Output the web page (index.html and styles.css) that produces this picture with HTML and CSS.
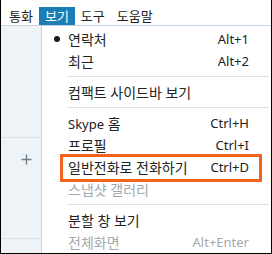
FILE: index.html
```html
<!DOCTYPE html>
<html lang="ko">
<head>
  <meta charset="UTF-8">
  <title>보기 메뉴</title>
  <link rel="stylesheet" href="styles.css">
</head>
<body>

  <div class="window">
    <div class="menubar">
      <span class="menu-item">통화</span>
      <span class="menu-item active">보기</span>
      <span class="menu-item">도구</span>
      <span class="menu-item">도움말</span>
    </div>

    <div class="main">
      <div class="sidebar">
        <div class="side-top"></div>
        <div class="side-mid">
          <svg class="plus" width="11" height="11" viewBox="0 0 11 11">
            <path d="M5.5 0.5 V10.5 M0.5 5.5 H10.5" stroke="#707d8a" stroke-width="1.4" fill="none"/>
          </svg>
        </div>
      </div>

      <div class="dropdown">
        <div class="row"><span class="mark"><span class="dot"></span></span><span class="label">연락처</span><span class="key">Alt+1</span></div>
        <div class="row"><span class="mark"></span><span class="label">최근</span><span class="key">Alt+2</span></div>
        <div class="sep"></div>
        <div class="row"><span class="mark"></span><span class="label">컴팩트 사이드바 보기</span></div>
        <div class="sep"></div>
        <div class="row"><span class="mark"></span><span class="label"><span class="en">Skype</span> 홈</span><span class="key">Ctrl+H</span></div>
        <div class="row"><span class="mark"></span><span class="label">프로필</span><span class="key">Ctrl+I</span></div>
        <div class="row"><span class="mark"></span><span class="label">일반전화로 전화하기</span><span class="key">Ctrl+D</span></div>
        <div class="row disabled"><span class="mark"></span><span class="label">스냅샷 갤러리</span></div>
        <div class="sep"></div>
        <div class="row"><span class="mark"></span><span class="label">분할 창 보기</span></div>
        <div class="row disabled"><span class="mark"></span><span class="label">전체화면</span><span class="key">Alt+Enter</span></div>
      </div>
    </div>

    <div class="highlight"></div>
  </div>

</body>
</html>
```

FILE: styles.css
```css
body {
  margin: 0;
  font-family: "Noto Sans", "Noto Sans CJK KR", sans-serif;
  font-size: 14px;
  color: #222;
}

.window {
  position: relative;
  width: 272px;
  height: 254px;
  box-sizing: border-box;
  border: 1px solid #000;
  border-top: none;
  display: flex;
  flex-direction: column;
  overflow: hidden;
  background: #fff;
}

.menubar {
  display: flex;
  height: 18px;
  padding: 7px 0 0 2px;
  border-bottom: 1px solid #c3d3e1;
  font-size: 13px;
}

.menu-item {
  padding: 0 6px;
  height: 18px;
  line-height: 18px;
}

.menu-item.active {
  background-color: #1a7db5;
  color: #fff;
}

.main {
  display: flex;
  flex: 1;
}

.sidebar {
  width: 40px;
  background-color: #eef3f8;
  border-right: 1px solid #c8d3dd;
}

.side-top {
  height: 111px;
  border-bottom: 1px solid #d6e0ea;
}

.side-mid {
  height: 84px;
  border-bottom: 1px solid #d6e0ea;
}

.plus {
  display: block;
  margin: 16px 0 0 20px;
}

.dropdown {
  flex: 1;
  padding-top: 2px;
}

.row {
  display: flex;
  align-items: center;
  height: 22px;
  padding-right: 22px;
}

.mark {
  width: 26px;
  box-sizing: border-box;
  padding-left: 3px;
  display: flex;
  justify-content: center;
}

.dot {
  width: 6px;
  height: 6px;
  border-radius: 50%;
  background-color: #1a1a1a;
}

.label {
  flex: 1;
  white-space: nowrap;
}

.en,
.key {
  font-size: 13px;
}

.key {
  white-space: nowrap;
}

.disabled {
  color: #a3a8ad;
}

.sep {
  height: 1px;
  margin: 4px 2px 4px 25px;
  background-color: #dbe2e9;
}

.highlight {
  position: absolute;
  left: 59px;
  top: 154px;
  width: 202px;
  height: 28px;
  box-sizing: border-box;
  border: 3px solid #f4621f;
}
```
